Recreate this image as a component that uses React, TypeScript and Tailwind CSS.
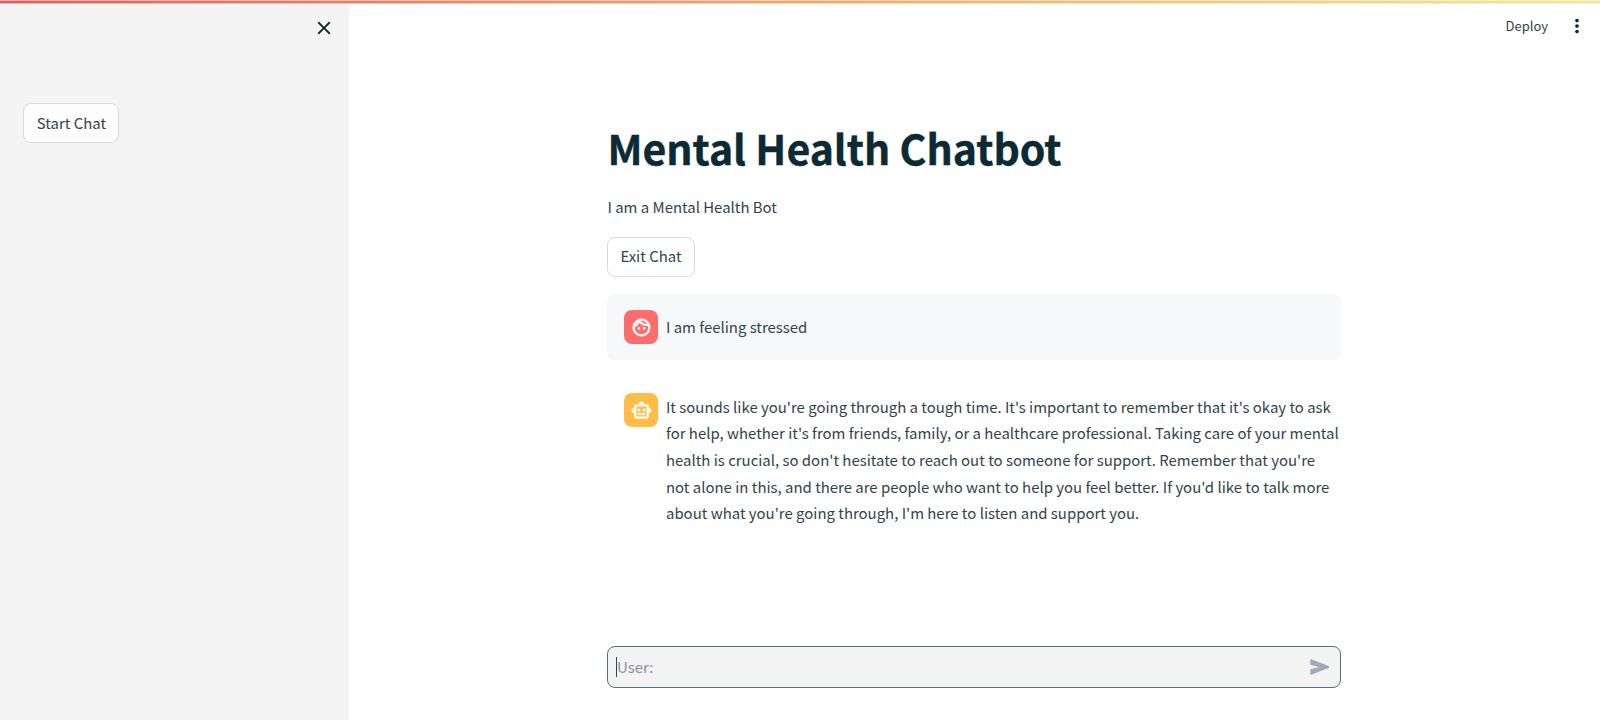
import { MdOutlineFace, MdOutlineSmartToy, MdClose, MdMoreVert } from "react-icons/md";

const reply = [
  { text: "It sounds like you're going through a tough time. It's important to remember that it's okay to ask" },
  { text: "for help, whether it's from friends, family, or a healthcare professional. Taking care of your mental" },
  { text: "health is crucial, so don't hesitate to reach out to someone for support. Remember that you're" },
  { text: "not alone in this, and there are people who want to help you feel better. If you'd like to talk more" },
  { text: "about what you're going through, I'm here to listen and support you." },
];

function Sidebar() {
  return (
    <aside className="flex w-[349px] shrink-0 flex-col bg-[#f4f4f4]">
      <div className="flex h-[54px] justify-end pt-[13px] pr-[14px]">
        <MdClose className="h-[22px] w-[22px] text-[#0b2a33]" />
      </div>
      <div className="pt-[45px] pl-[23px]">
        <button className="h-[40px] w-[96px] rounded-lg border border-[#d6dadc] bg-[#fdfdfd] pl-px whitespace-nowrap">Start Chat</button>
      </div>
    </aside>
  );
}

function SendIcon() {
  return (
    <svg viewBox="0 0 20 16" className="h-[16px] w-[20px] text-[#a3a8b8]" fill="currentColor">
      <path d="M1.2 0.3 18.6 7.1Q20 8 18.6 8.9L1.2 15.7Q0.3 16 0.3 15V10.3L9 8 0.3 5.7V1Q0.3 0 1.2 0.3Z" />
    </svg>
  );
}

export default function App() {
  return (
    <div className="flex h-[720px] w-[1600px] flex-col overflow-hidden bg-white font-['Noto_Sans_CJK_SC',sans-serif] text-[14.93px] leading-[26.67px] text-[#31444c]">
      <div className="h-1 shrink-0 border-y border-white/50 bg-linear-to-r from-[#dc5f60] via-[#f3a66f] to-[#f0e79c] bg-origin-border" />
      <div className="flex flex-1">
        <Sidebar />
        <main className="flex flex-1 flex-col">
          <header className="flex h-[44px] items-center justify-end pr-[12px]">
            <span className="mr-[18px] text-[13px]">Deploy</span>
            <MdMoreVert className="h-[22px] w-[22px] text-[#0b2a33]" />
          </header>
          <div className="ml-[258px] flex w-[734px] flex-col">
            <h1 className="mt-[72px] h-[55px] text-[41px] leading-[55px] font-bold whitespace-nowrap text-[#0b2a33] [-webkit-text-stroke:0.4px_#0b2a33] pl-[0.5px]">Mental Health Chatbot</h1>
            <p className="mt-[19px] h-[27px] pl-[0.5px]">I am a Mental Health Bot</p>
            <button className="mt-[16px] h-[40px] w-[88px] rounded-lg border border-[#d6dadc] pb-px whitespace-nowrap">Exit Chat</button>
            <section className="mt-[17px] flex h-[66px] items-center gap-[8px] rounded-lg bg-[#f6f8fa] pl-[17px]">
              <span className="flex h-[34px] w-[34px] items-center justify-center rounded-lg bg-[#ff6c6c] text-white">
                <MdOutlineFace className="h-[21px] w-[21px] [&>path[fill=none]]:stroke-none" stroke="currentColor" strokeWidth="0.5" />
              </span>
              <p>I am feeling stressed</p>
            </section>
            <section className="mt-[33px] flex gap-[8px] pl-[17px]">
              <span className="flex h-[34px] w-[34px] shrink-0 items-center justify-center rounded-lg bg-[#ffbd45] text-white">
                <MdOutlineSmartToy className="h-[21px] w-[21px] [&>path[fill=none]]:stroke-none" stroke="currentColor" strokeWidth="0.5" />
              </span>
              <p className="flex flex-col pt-[0.6px] whitespace-nowrap">
                {reply.map((line) => (
                  <span key={line.text}>{line.text}</span>
                ))}
              </p>
            </section>
            <div className="mt-[119px] flex h-[42px] items-center justify-between rounded-lg border border-[#5b6d73] bg-[#f3f3f3] pr-[10px] pl-[8px] text-[#8b8d9a]">
              <div className="flex items-center">
                <span className="h-[20px] w-px bg-[#31444c]" />
                <span>User:</span>
              </div>
              <SendIcon />
            </div>
          </div>
        </main>
      </div>
    </div>
  );
}
